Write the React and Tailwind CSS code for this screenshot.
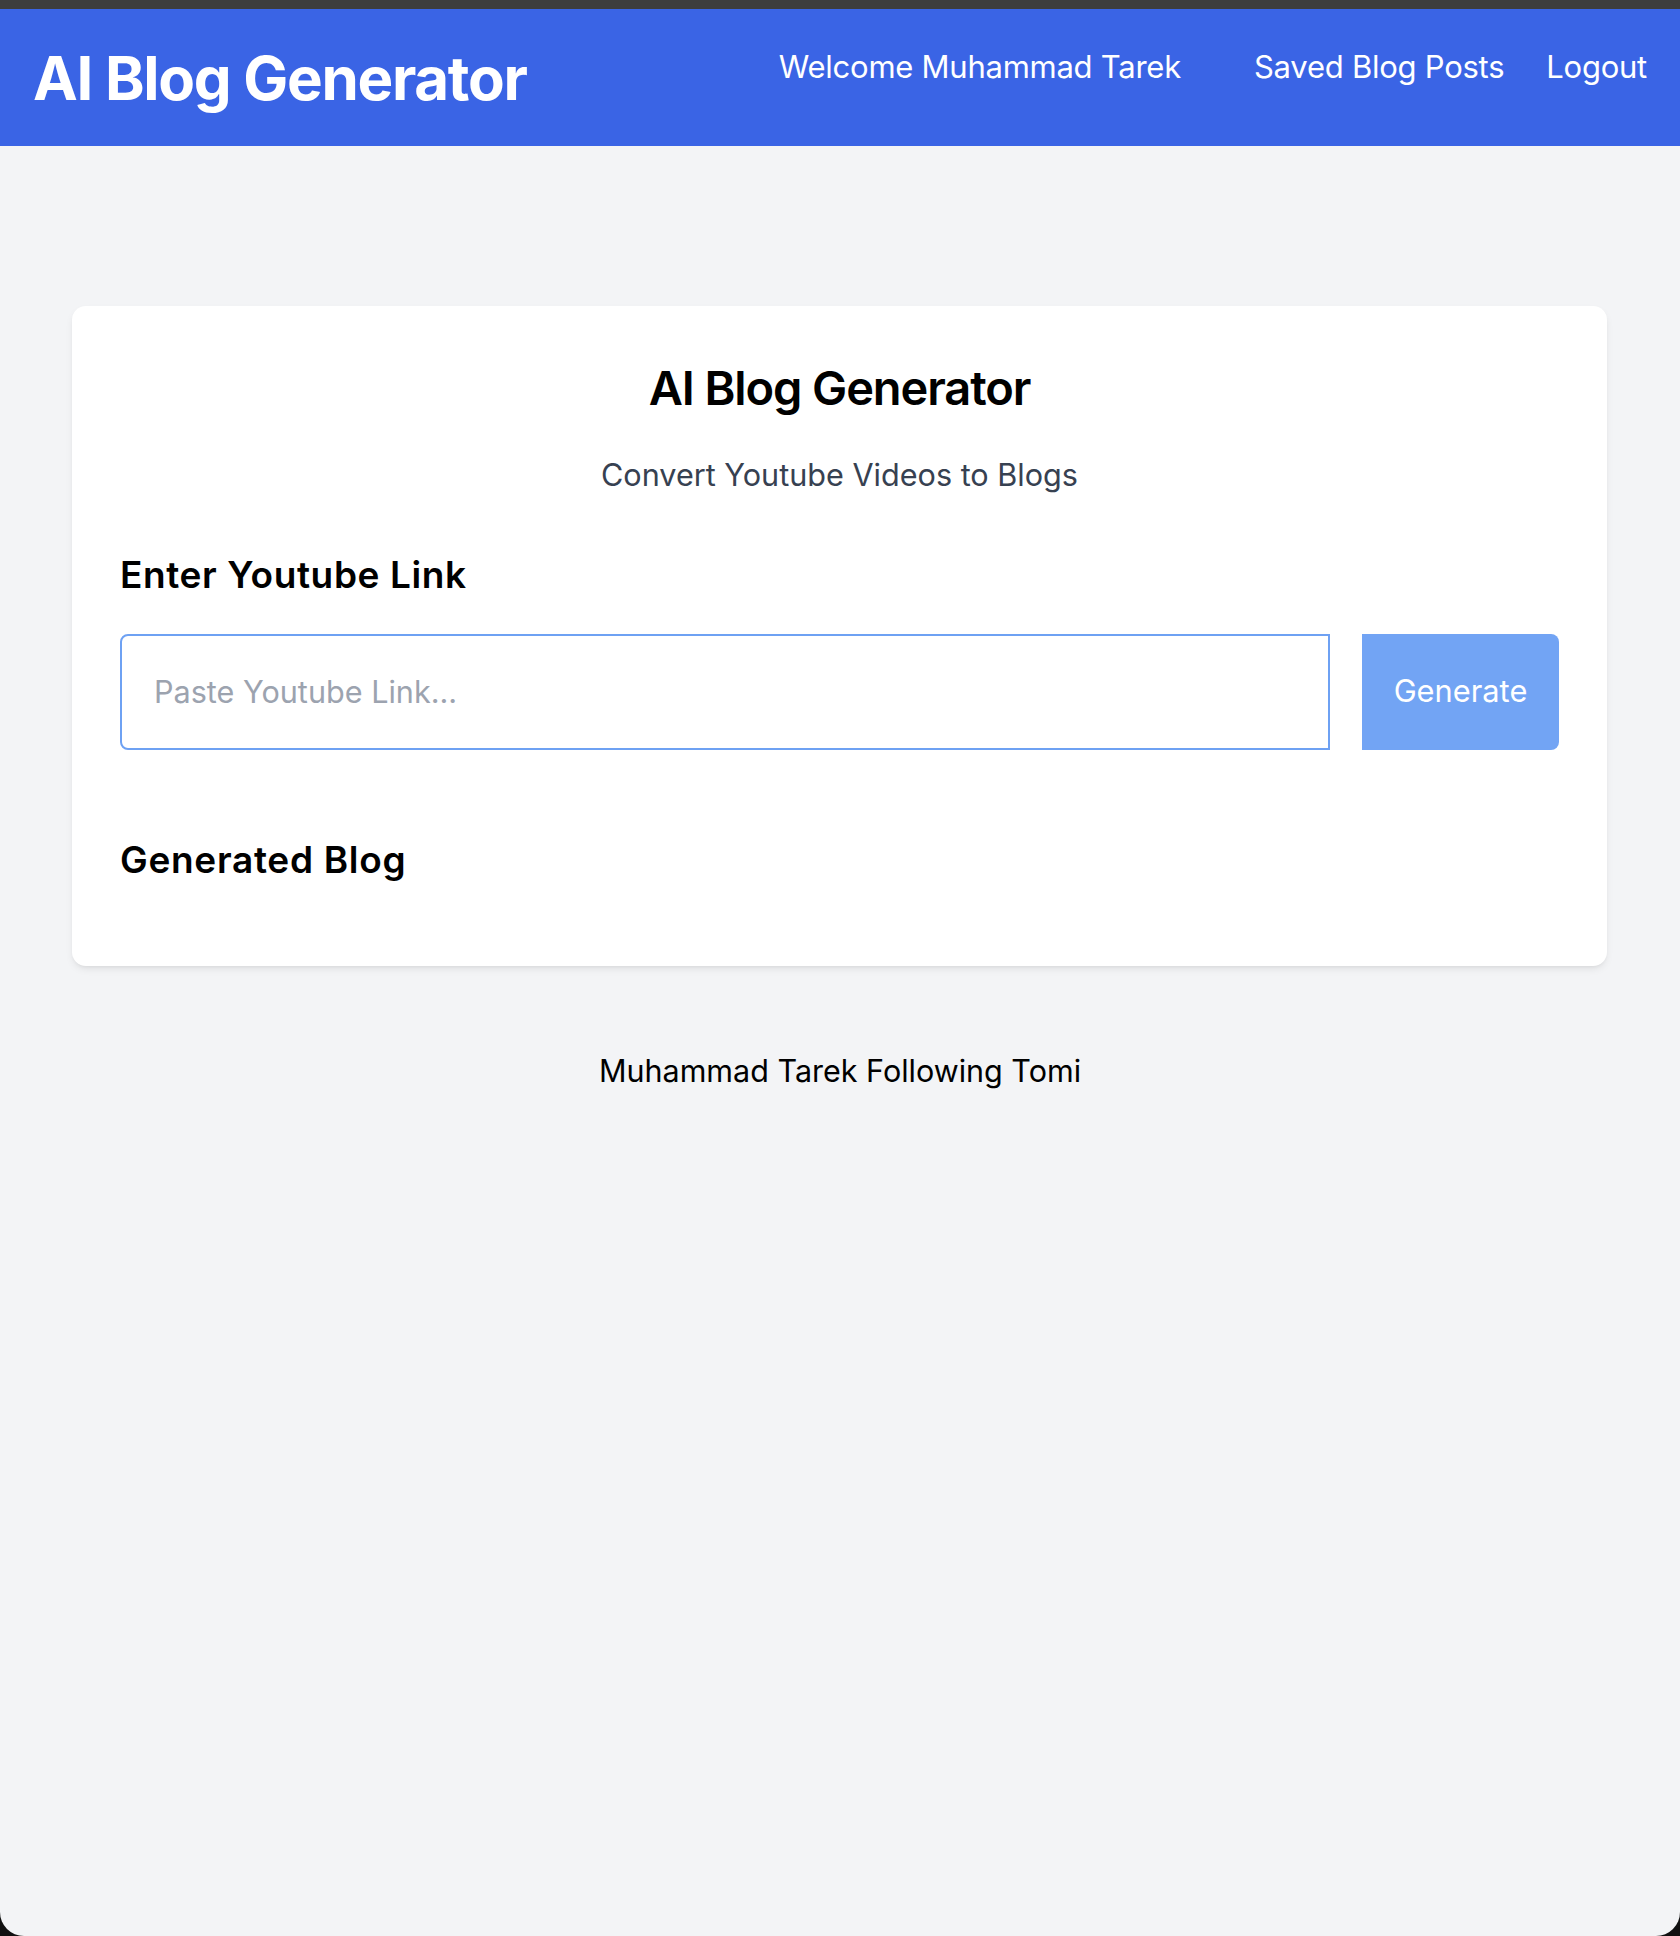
import React from "react";

export default function App() {
  return (
    <div className="relative h-[1936px] overflow-hidden bg-[#f3f4f6] font-['Inter','Noto_Sans',sans-serif] text-black">
      <div className="h-[9px] bg-[#3d3d3d]" />
      <nav className="flex h-[137px] justify-between bg-[#3a64e5] pl-[33px] pr-[33px] text-white">
        <h1 className="self-center text-[60px] font-bold leading-none tracking-[-1.3px]">AI Blog Generator</h1>
        <div className="flex items-start pt-[42px] text-[31px] leading-none tracking-[-0.25px]">
          <a className="mr-[73px]">Welcome Muhammad Tarek</a>
          <a className="mr-[42px]">Saved Blog Posts</a>
          <a>Logout</a>
        </div>
      </nav>

      <main className="pt-[160px]">
        <div className="ml-[72px] w-[1535px] rounded-[14px] bg-white px-[48px] pb-[88px] pt-[58px] shadow-[0_4px_8px_-2px_rgba(0,0,0,0.1),0_2px_4px_-2px_rgba(0,0,0,0.06)]">
          <h2 className="text-center text-[47px] font-semibold leading-none tracking-[-1.1px]">AI Blog Generator</h2>
          <p className="mt-[49px] text-center text-[30.6px] leading-none text-[#374151]">
            Convert Youtube Videos to Blogs
          </p>
          <h3 className="mt-[65px] text-[37px] font-semibold leading-none tracking-[0.6px]">Enter Youtube Link</h3>
          <div className="mt-[41px] flex gap-[32px]">
            <input
              type="text"
              placeholder="Paste Youtube Link..."
              className="h-[116px] flex-1 rounded-l-[8px] border-2 border-[#6ea1f3] pl-[32px] text-[30.6px] outline-none placeholder:text-[#9ca3af]"
            />
            <button className="h-[116px] w-[197px] rounded-r-[8px] bg-[#72a4f4] text-[30.8px] leading-none text-white">
              Generate
            </button>
          </div>
          <h3 className="mt-[91px] text-[37px] font-semibold leading-none tracking-[0.7px]">Generated Blog</h3>
        </div>
      </main>

      <footer className="mt-[90px] text-center text-[30.5px] leading-none">Muhammad Tarek Following Tomi</footer>

      <div className="absolute bottom-0 left-0 h-[24px] w-[24px] bg-[#111]">
        <div className="h-full w-full rounded-bl-[24px] bg-[#f3f4f6]" />
      </div>
      <div className="absolute bottom-0 right-0 h-[24px] w-[24px] bg-[#111]">
        <div className="h-full w-full rounded-br-[24px] bg-[#f3f4f6]" />
      </div>
    </div>
  );
}
